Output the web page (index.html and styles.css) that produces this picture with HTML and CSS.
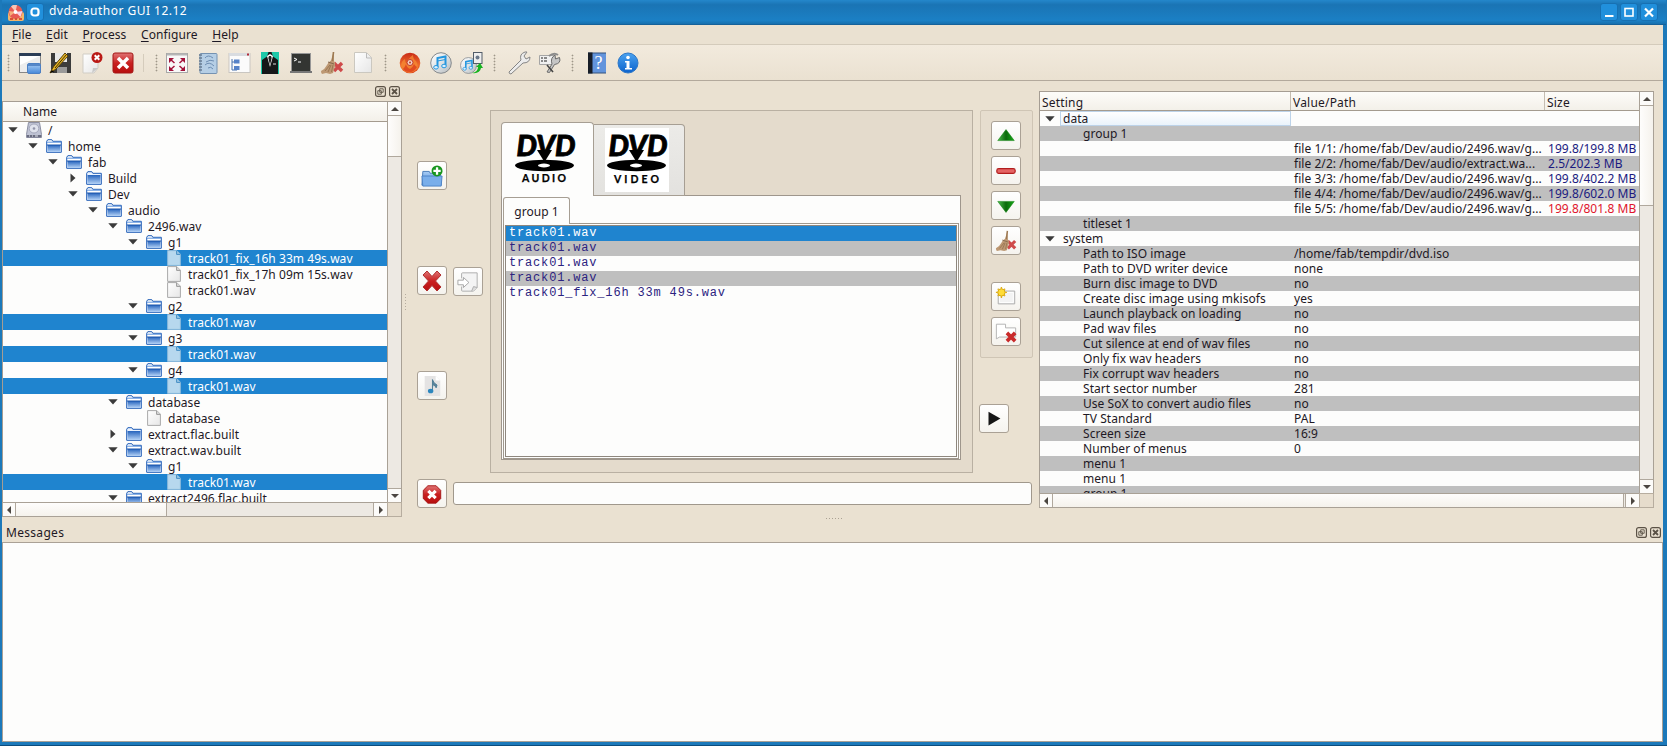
FILE: index.html
```html
<!DOCTYPE html>
<html lang="en">
<head>
<meta charset="utf-8">
<title>dvda-author GUI 12.12</title>
<link rel="stylesheet" href="styles.css">
</head>
<body>
<svg class="defs" width="0" height="0">
  <defs>
    <linearGradient id="gFolder" x1="0" y1="0" x2="0" y2="1"><stop offset="0" stop-color="#2563bd"/><stop offset="1" stop-color="#b4d2f6"/></linearGradient>
    <linearGradient id="gPage" x1="0" y1="0" x2="1" y2="1"><stop offset="0" stop-color="#fff"/><stop offset="1" stop-color="#e6e6e6"/></linearGradient>
    <linearGradient id="gRed" x1="0" y1="0" x2="0" y2="1"><stop offset="0" stop-color="#e07575"/><stop offset=".5" stop-color="#c92020"/><stop offset="1" stop-color="#b80f0f"/></linearGradient>
    <linearGradient id="gBlue" x1="0" y1="0" x2="0" y2="1"><stop offset="0" stop-color="#a9cdf5"/><stop offset="1" stop-color="#4688d8"/></linearGradient>
    <linearGradient id="gGreen" x1="0" y1="0" x2="1" y2="0"><stop offset="0" stop-color="#4dbb4d"/><stop offset=".5" stop-color="#0c6a0c"/><stop offset="1" stop-color="#16a916"/></linearGradient>
    <linearGradient id="gFire" x1="0" y1="0" x2="0" y2="1"><stop offset="0" stop-color="#c92b17"/><stop offset=".6" stop-color="#ee6c2b"/><stop offset="1" stop-color="#d83a1c"/></linearGradient>
    <linearGradient id="gDisc" x1="0" y1="0" x2="1" y2="1"><stop offset="0" stop-color="#fff"/><stop offset=".5" stop-color="#dfe3e6"/><stop offset="1" stop-color="#b5b9bb"/></linearGradient>
    <linearGradient id="gInfo" x1="0" y1="0" x2="0" y2="1"><stop offset="0" stop-color="#4ba3f0"/><stop offset="1" stop-color="#0c62cc"/></linearGradient>
    <symbol id="folder-open" viewBox="0 0 16 14"><path d="M.7 13.3V2.3L1.8.7h4l1 1.6h8.5v11z" fill="#fff" stroke="#1d5bb5"/><path d="M1.500 6h13v7h-13z" fill="url(#gFolder)"/><path d="M1 3.200h14" stroke="#5c93dd"/><path d="M1 6h14" stroke="#1c56ac"/></symbol>
    <symbol id="folder" viewBox="0 0 16 14"><path d="M.7 13.3V2.3L1.8.7h4l1 1.6h8.5v11z" fill="#eaf3ff" stroke="#1d5bb5"/><path d="M1.500 4h13v9h-13z" fill="url(#gFolder)"/></symbol>
    <symbol id="file" viewBox="0 0 14 16"><path d="M.6.6h9.2l3.6 3.6v11.2H.6z" fill="url(#gPage)" stroke="#a9a9a9"/><path d="M9.6.8v3.6h3.7" fill="#ddd" stroke="#999"/></symbol>
    <symbol id="file-sel" viewBox="0 0 14 16"><path d="M.6.6h9.2l3.6 3.6v11.2H.6z" fill="#b7d8ee" stroke="#89b8da"/><path d="M9.6.8v3.6h3.7" fill="#9ac6e4" stroke="#468fc4"/></symbol>
    <symbol id="disk" viewBox="0 0 16 16"><path d="M2.5.5h11l2 12v3H.5v-3z" fill="#bfc3d4" stroke="#8d90a3"/><ellipse cx="8" cy="6.500" rx="4.800" ry="4.500" fill="#dfe2ec" stroke="#989cb0" stroke-width=".8"/><circle cx="8" cy="6.500" r="1.300" fill="#9195aa"/><path d="M1 13h14v2.200H1z" fill="#696c80"/><path d="M3 14h1m2 0h1m2 0h3" stroke="#e5e6ed"/></symbol>
    <symbol id="down" viewBox="0 0 10 6"><path d="M.3.3h9.4L5 5.6z" fill="#3b3b3b"/></symbol>
    <symbol id="right" viewBox="0 0 6 10"><path d="M.5.5v9l5-4.500z" fill="#3b3b3b"/></symbol>
    <symbol id="cross" viewBox="0 0 22 22"><path d="M2 5l4-4 5 5.500L16 1l4 4-5.500 6 5.500 6-4 4-5-5.500L6 21l-4-4 5.500-6z" fill="url(#gRed)" stroke="#b13030"/></symbol>
    <symbol id="broom" viewBox="0 0 24 24"><path d="M14 12l8 8m0-8l-8 8" stroke="#cf4a4a" stroke-width="3.400"/><path d="M13.500 1l.5 9q2 2 1 5l-2 7-3 1-4-1-4 1q-1-1-1-3 4-2 6-6 1-3 4-4.500z" fill="#bd9873"/><path d="M5 20l5-6M8 21l3-7M11.500 21l1.500-7" stroke="#8b6845" stroke-width=".7"/><path d="M13.500 1l-1 9" stroke="#9d7952" stroke-width="1.600"/><path d="M8 11l6 2" stroke="#86684d"/></symbol>
    <symbol id="float" viewBox="0 0 11 11"><rect x=".6" y=".6" width="9.800" height="9.800" rx="2" fill="none" stroke="#5b5246" stroke-width="1.200"/><path d="M4.700 2.800h3.500v3.500H4.700zM2.800 4.700h3.500v3.500H2.800z" fill="none" stroke="#5b5246" stroke-width=".9"/></symbol>
    <symbol id="close" viewBox="0 0 11 11"><rect x=".6" y=".6" width="9.800" height="9.800" rx="2" fill="none" stroke="#5b5246" stroke-width="1.200"/><path d="M3 3l5 5m0-5L3 8" stroke="#5b5246" stroke-width="1.800"/></symbol>
    <symbol id="tuneDisc" viewBox="0 0 22 22"><circle cx="11" cy="11" r="10.300" fill="url(#gDisc)" stroke="#85898c"/><path d="M7.500 15V6l8-1.500v9" fill="none" stroke="#2296df" stroke-width="2"/><path d="M7.500 9l8-1.500" stroke="#2296df"/><ellipse cx="6" cy="15.300" rx="2.300" ry="1.800" fill="#d8efff" stroke="#2296df"/><ellipse cx="14" cy="14" rx="2.300" ry="1.800" fill="#d8efff" stroke="#2296df"/></symbol>
    <symbol id="dvd" viewBox="0 0 64 64"><text x="3.500" y="27.500" class="dvd-big" textLength="59" lengthAdjust="spacingAndGlyphs">DVD</text><path d="M24 22h15l-7.500 12z"/><path fill-rule="evenodd" d="M2 37.500a29.500 5.700 0 1 0 59 0a29.500 5.700 0 1 0-59 0zM25 37.500a6 1.900 0 1 0 12 0a6 1.900 0 1 0-12 0z"/></symbol>
  </defs>
</svg>

<div class="window">
  <header class="titlebar">
    <svg class="app-icon" viewBox="0 0 16 16"><rect y="7" width="16" height="9" rx="2" fill="#f2b569"/><circle cx="7.500" cy="7" r="7" fill="#e75a53"/><path d="M7.500 7L3 1.500A6 6 0 0 1 9 0z" fill="#f9c5b5"/><path d="M7.500 7l5 5 2-6z" fill="#f8d2e2"/><path d="M7.500 7L1 6l1 5z" fill="#f6b07d"/><circle cx="7.500" cy="7" r="2" fill="#fff"/><path d="M2 14h3m2 0h2m2 0h3" stroke="#d75136" stroke-width="2"/></svg>
    <span class="tbtn tbtn-menu"><svg viewBox="0 0 16 16"><rect x="4.500" y="4.500" width="7" height="7" rx="2.500" fill="none" stroke="#fff" stroke-width="2.200"/></svg></span>
    <h1>dvda-author GUI 12.12</h1>
    <span class="tbtn"><svg viewBox="0 0 16 16"><path d="M4 12h8.500" stroke="#fff" stroke-width="2"/></svg></span>
    <span class="tbtn"><svg viewBox="0 0 16 16"><rect x="4" y="4.500" width="8" height="7.500" fill="none" stroke="#fff" stroke-width="1.600"/></svg></span>
    <span class="tbtn"><svg viewBox="0 0 16 16"><path d="M4 4.500l8 8m0-8l-8 8" stroke="#fff" stroke-width="2.200"/></svg></span>
  </header>
  <nav class="menubar"><span><u>F</u>ile</span><span><u>E</u>dit</span><span><u>P</u>rocess</span><span><u>C</u>onfigure</span><span><u>H</u>elp</span></nav>
  <div class="toolbar">
    <i class="grip first"></i>
    <svg viewBox="0 0 24 24"><rect x="1.500" y="2.500" width="21" height="19" fill="#ededed" stroke="#878787"/><path d="M1 2h22v3H1z" fill="#2c3e57"/><path d="M2 5h20L2 14z" fill="#fff"/><rect x="9.500" y="12.500" width="13" height="10" rx="1.500" fill="url(#gBlue)" stroke="#4c80c4"/><path d="M10 14h12" stroke="#5687c8" stroke-width="2"/></svg>
    <svg viewBox="0 0 24 24"><path d="M2 2h20v20H4l-2-2z" fill="#3b3b3b"/><path d="M6 2h12v9H6z" fill="#e9e9e9"/><path d="M8 16h10v6H8z" fill="#999"/><path d="M2 20l3-5L16 2l3 3L7 18l-6 4z" fill="#e8b524" stroke="#5b430b"/><path d="M6 17L17.500 3.500" stroke="#3f3007"/><path d="M1 22l4-1-2-2z" fill="#000"/></svg>
    <svg viewBox="0 0 24 24"><path d="M3 3h15v14l-4 5H3z" fill="url(#gPage)" stroke="#d1cdc5"/><path d="M18 17l-6 5 1-5z" fill="#c8c8c8"/><circle cx="17" cy="6.500" r="5.500" fill="#ba1a16"/><path d="M14.700 4.200l4.600 4.600m0-4.600l-4.600 4.600" stroke="#fff" stroke-width="2"/></svg>
    <svg viewBox="0 0 24 24"><rect x="2" y="2" width="20" height="20" rx="2" fill="url(#gRed)" stroke="#a41717"/><path d="M7 7l10 10m0-10L7 17" stroke="#fff" stroke-width="3.500"/></svg>
    <i class="sep"></i><i class="grip"></i>
    <svg viewBox="0 0 24 24"><rect x="1.500" y="2.500" width="21" height="19" fill="#f8f8f8" stroke="#a7a7a7"/><path d="M2 3.500h20" stroke="#b6b6b6" stroke-width="2"/><path d="M4 7h5l-5 5zM20 7h-5l5 5zM4 20h5l-5-5zM20 20h-5l5-5z" fill="#a3133a"/><path d="M5 8l4.500 4m9.500-4l-4.500 4M5 19l4.500-4m9.500 4l-4.500-4" stroke="#a3133a" stroke-width="1.500"/></svg>
    <svg viewBox="0 0 24 24"><rect x="4" y="2.500" width="17" height="20" rx="1" fill="#b5cee5" stroke="#7592b1"/><path d="M3 4h3M3 7h3M3 10h3M3 13h3M3 16h3M3 19h3" stroke="#687c93" stroke-width="1.500"/><path d="M9 7q3-4 8 0m-7 4q4-3 8-1m-9 4q4-4 9 1m-6 2q3-2 5 1" fill="none" stroke="#6d8db2"/></svg>
    <svg viewBox="0 0 24 24"><rect x="2" y="2.500" width="21" height="19" fill="#fbfbfb" stroke="#c9c6c1"/><path d="M2 2h21v3H2z" fill="#d9dce0"/><path d="M5 8v11h5m-5-8h5" fill="none" stroke="#4870ab"/><path d="M7 8.500h5.500v4H7zM7 15h5.500v4H7z" fill="#5682c8"/><path d="M20 3.500h2" stroke="#b42b37" stroke-width="2"/></svg>
    <svg viewBox="0 0 24 24"><path d="M3 1h18v22H3z" fill="#1cc8a9"/><path d="M4 23V9l5-3.500L10.500 1h3L15 5.500 20 9v14z" fill="#161719"/><path d="M9 5l3 11 3-11-3-2z" fill="#fff"/><path d="M11 5h2l.7 2L12 14l-1.700-7z" fill="#222"/><path d="M15 13h3" stroke="#ddd"/></svg>
    <svg viewBox="0 0 24 24"><rect x="2.500" y="2.500" width="19" height="18" fill="#333532" stroke="#969696"/><path d="M1 20h22v2H1z" fill="#777"/><path d="M5 7l3 1.500L5 10m4 1h3" fill="none" stroke="#fff"/></svg>
    <svg><use href="#broom"/></svg>
    <svg viewBox="0 0 24 24"><path d="M3.500 1.500h12l5 5v15h-17z" fill="url(#gPage)" stroke="#cbc8c0"/><path d="M15.500 2v5h5" fill="#eee" stroke="#bbb"/></svg>
    <i class="grip narrow"></i>
    <svg viewBox="0 0 24 24"><circle cx="12" cy="12" r="10.300" fill="url(#gFire)"/><path d="M3 16q0-6 4-8 0 4 2 5 1-6 6-9 0 4 3 6 2 3 2 7-4 5-9 5-6-1-8-6z" fill="#f58b34" opacity=".75"/><path d="M5 18q2-2 3-5 1 4 4 5 3-2 4-5 2 3 3 3-3 5-7 5-5 0-7-3z" fill="#d62a17" opacity=".6"/><circle cx="12" cy="11.500" r="3" fill="#f3cfc4" stroke="#c23c29"/><circle cx="12" cy="11.500" r="1" fill="#b83c2c"/></svg>
    <svg viewBox="-1 -1 24 24"><use href="#tuneDisc" width="22" height="22"/></svg>
    <svg viewBox="0 0 24 24"><use href="#tuneDisc" x="0" y="6" width="17" height="17"/><rect x="13.500" y="1.500" width="8.500" height="11" fill="#eee" stroke="#525c68"/><circle cx="17.500" cy="6.500" r="2" fill="#6a7789"/><path d="M12 22q6-1 6-6h-2l4-4 3 5h-2q-1 6-9 5z" fill="#16b320"/></svg>
    <i class="grip narrow"></i>
    <svg viewBox="0 0 24 24"><path d="M2 21L14 9q-2-6 4-8h2l-3 4 2 3 4-2q0 6-7 6L4 23q-2 0-2-2z" fill="#ececec" stroke="#858585"/></svg>
    <svg viewBox="0 0 24 24"><path d="M1.500 4.500h14v9h-14z" fill="#f0f0f0" stroke="#a5a5a5"/><path d="M3 7h2m1 0h3M3 10h2m1 0h3" stroke="#888" stroke-width="2"/><path d="M9 21l5-8q-2-6 3-9l.5 4 4-1.500q2 6-5 7l-5 8z" fill="#c5c5c5" stroke="#6b6b6b"/><path d="M9 14l6 7" stroke="#444" stroke-width="1.600"/><path d="M11 5q5-4 9-1" fill="none" stroke="#8b8b8b" stroke-width="2"/></svg>
    <i class="grip narrow"></i>
    <svg viewBox="0 0 24 24"><path d="M3 2h18v20H3z" fill="#6294dc"/><path d="M3 2h18M3 22h18" stroke="#35537d"/><path d="M3 1.500h4.500v21H3z" fill="#171d27"/><text x="9.500" y="18" class="help-mark">?</text></svg>
    <svg viewBox="0 0 24 24"><circle cx="12" cy="12" r="10" fill="url(#gInfo)" stroke="#2c77c8"/><circle cx="12" cy="6.500" r="1.800" fill="#fff"/><path d="M9 10h4.500v7H16v1.500H9V17h1.500v-5.500H9z" fill="#fff"/></svg>
  </div>

  <main class="main">
    <section class="dock">
      <div class="dock-head"><svg><use href="#float"/></svg><svg><use href="#close"/></svg></div>
      <div class="tree">
        <div class="tree-body">
          <div class="tree-header">Name</div>
          <div class="rows">
            <div class="row d0"><b><svg class="dn"><use href="#down"/></svg></b><i><svg class="dk"><use href="#disk"/></svg></i>/</div>
            <div class="row d1"><b><svg class="dn"><use href="#down"/></svg></b><i><svg><use href="#folder-open"/></svg></i>home</div>
            <div class="row d2"><b><svg class="dn"><use href="#down"/></svg></b><i><svg><use href="#folder-open"/></svg></i>fab</div>
            <div class="row d3"><b><svg class="rt"><use href="#right"/></svg></b><i><svg><use href="#folder"/></svg></i>Build</div>
            <div class="row d3"><b><svg class="dn"><use href="#down"/></svg></b><i><svg><use href="#folder-open"/></svg></i>Dev</div>
            <div class="row d4"><b><svg class="dn"><use href="#down"/></svg></b><i><svg><use href="#folder-open"/></svg></i>audio</div>
            <div class="row d5"><b><svg class="dn"><use href="#down"/></svg></b><i><svg><use href="#folder-open"/></svg></i>2496.wav</div>
            <div class="row d6"><b><svg class="dn"><use href="#down"/></svg></b><i><svg><use href="#folder-open"/></svg></i>g1</div>
            <div class="row d7 sel"><b></b><i><svg class="fl"><use href="#file-sel"/></svg></i>track01_fix_16h 33m 49s.wav</div>
            <div class="row d7"><b></b><i><svg class="fl"><use href="#file"/></svg></i>track01_fix_17h 09m 15s.wav</div>
            <div class="row d7"><b></b><i><svg class="fl"><use href="#file"/></svg></i>track01.wav</div>
            <div class="row d6"><b><svg class="dn"><use href="#down"/></svg></b><i><svg><use href="#folder-open"/></svg></i>g2</div>
            <div class="row d7 sel"><b></b><i><svg class="fl"><use href="#file-sel"/></svg></i>track01.wav</div>
            <div class="row d6"><b><svg class="dn"><use href="#down"/></svg></b><i><svg><use href="#folder-open"/></svg></i>g3</div>
            <div class="row d7 sel"><b></b><i><svg class="fl"><use href="#file-sel"/></svg></i>track01.wav</div>
            <div class="row d6"><b><svg class="dn"><use href="#down"/></svg></b><i><svg><use href="#folder-open"/></svg></i>g4</div>
            <div class="row d7 sel"><b></b><i><svg class="fl"><use href="#file-sel"/></svg></i>track01.wav</div>
            <div class="row d5"><b><svg class="dn"><use href="#down"/></svg></b><i><svg><use href="#folder-open"/></svg></i>database</div>
            <div class="row d6"><b></b><i><svg class="fl"><use href="#file"/></svg></i>database</div>
            <div class="row d5"><b><svg class="rt"><use href="#right"/></svg></b><i><svg><use href="#folder"/></svg></i>extract.flac.built</div>
            <div class="row d5"><b><svg class="dn"><use href="#down"/></svg></b><i><svg><use href="#folder-open"/></svg></i>extract.wav.built</div>
            <div class="row d6"><b><svg class="dn"><use href="#down"/></svg></b><i><svg><use href="#folder-open"/></svg></i>g1</div>
            <div class="row d7 sel"><b></b><i><svg class="fl"><use href="#file-sel"/></svg></i>track01.wav</div>
            <div class="row d5"><b><svg class="dn"><use href="#down"/></svg></b><i><svg><use href="#folder-open"/></svg></i>extract2496.flac.built</div>
          </div>
        </div>
        <div class="vscroll"><span class="sb up"></span><span class="thumb t-tree"></span><span class="sb dn"></span></div>
        <div class="hscroll"><span class="sb lt"></span><span class="thumb h-tree"></span><span class="sb rt"></span></div>
        <div class="corner"></div>
      </div>
    </section>
    <div class="vgrip"></div>

    <section class="center">
      <div class="upper">
        <div class="left-tools">
          <button class="btn add"><svg viewBox="0 0 24 24"><path d="M1 22L2 7h7l1 2h11l1 13z" fill="url(#gBlue)" stroke="#4377b7"/><path d="M1 12h22l-1 11H2z" fill="#79aeea" stroke="#4a81c5"/><circle cx="17.500" cy="6.500" r="6" fill="#18961f"/><path d="M17.500 2.500v8m-4-4h8" stroke="#fff" stroke-width="2.500"/></svg></button>
          <div class="pair"><button class="btn"><svg><use href="#cross"/></svg></button><button class="btn imp"><svg viewBox="0 0 24 24"><path d="M5 8V3q0-1 1-1h16v16l-4 4H6q-1 0-1-1v-4" fill="#f4f4f4" stroke="#aaa"/><path d="M16 22l2-5 4 1" fill="#ddd" stroke="#aaa"/><path d="M1 10h6V7l6 5.500L7 18v-3H1z" fill="#fff" stroke="#a2a2a2"/></svg></button></div>
          <button class="btn note"><svg viewBox="0 0 24 24"><path d="M4 1h12l5 5v17H4z" fill="#e4e3e3"/><path d="M16 1v5h5z" fill="#fff"/><path d="M12.500 17V5q1 4 5 6l-1 3q-1-3-3-3" fill="#59849d" stroke="#497892"/><ellipse cx="10.500" cy="17.500" rx="3" ry="2.500" fill="#2c86bd"/></svg></button>
        </div>
        <div class="frame">
          <div class="disc-tabs">
            <div class="dtab on"><svg viewBox="0 0 64 64"><use href="#dvd" width="64" height="64"/><text x="9" y="54" class="dvd-small" textLength="44">AUDIO</text></svg></div>
            <div class="dtab"><svg class="white" viewBox="0 0 64 64"><use href="#dvd" width="64" height="64"/><text x="9" y="54.500" class="dvd-small" textLength="45">VIDEO</text></svg></div>
          </div>
          <div class="pane">
            <div class="gtab">group 1</div>
            <div class="ipane"><div class="list">
              <div class="sel">track01.wav</div><div class="alt">track01.wav</div><div>track01.wav</div><div class="alt">track01.wav</div><div>track01_fix_16h 33m 49s.wav</div>
            </div></div>
          </div>
        </div>
        <div class="side">
          <div class="side-box">
            <button class="btn"><svg viewBox="0 0 24 24"><path d="M12 5l9 12H3z" fill="url(#gGreen)" stroke="#158415" stroke-width=".6"/></svg></button>
            <button class="btn"><svg viewBox="0 0 24 24"><rect x="2" y="9.500" width="20" height="5" rx="2" fill="#e56464" stroke="#b21d1d" stroke-width="1.300"/></svg></button>
            <button class="btn"><svg viewBox="0 0 24 24"><path d="M12 19l9-12H3z" fill="url(#gGreen)" stroke="#158415" stroke-width=".6"/></svg></button>
            <button class="btn"><svg><use href="#broom"/></svg></button>
            <button class="btn gap"><svg viewBox="0 0 24 24"><path d="M3.500 5.500h18v14h-18z" fill="#eee" stroke="#aaa"/><path d="M5 7h15v11H5z" fill="#f3f3f3" stroke="#fff"/><circle cx="7" cy="7" r="4" fill="#ffdc37" stroke="#d2a20f"/><path d="M7 1v2m0 8v2M1 7h2m8 0h2M3 3l1 1m6 6l1 1M11 3l-1 1M3 11l1-1" stroke="#dfae16" stroke-width="1.500"/></svg></button>
            <button class="btn"><svg viewBox="0 0 24 24"><path d="M1.500 3.500h10v4h11v10H5l-3.500 2z" fill="#fff" stroke="#b0b0b0"/><path d="M13 13l9 9m0-9l-9 9" stroke="#c92a2a" stroke-width="4"/></svg></button>
          </div>
          <button class="btn play"><svg viewBox="0 0 24 24"><path d="M6 4l13 7.500L6 19z" fill="#161616"/></svg></button>
        </div>
      </div>
      <div class="lower"><button class="btn"><svg viewBox="0 0 24 24"><path d="M7.500 3h9l5 5v9l-5 5h-9l-5-5V8z" fill="url(#gRed)" stroke="#a41313"/><path d="M8 8.500l8 8m0-8l-8 8" stroke="#fff" stroke-width="3.500"/></svg></button><div class="input"></div></div>
      <div class="hgrip"></div>
    </section>

    <section class="settings">
      <div class="set-body">
        <div class="srow head"><span>Setting</span><span>Value/Path</span><span>Size</span></div>
        <div class="srow top current"><span><svg><use href="#down"/></svg><em>data</em></span></div>
        <div class="srow alt"><span>group 1</span></div>
        <div class="srow"><span></span><span>file 1/1: /home/fab/Dev/audio/2496.wav/g...</span><span class="blue">199.8/199.8 MB</span></div>
        <div class="srow alt"><span></span><span>file 2/2: /home/fab/Dev/audio/extract.wa...</span><span class="blue">2.5/202.3 MB</span></div>
        <div class="srow"><span></span><span>file 3/3: /home/fab/Dev/audio/2496.wav/g...</span><span class="blue">199.8/402.2 MB</span></div>
        <div class="srow alt"><span></span><span>file 4/4: /home/fab/Dev/audio/2496.wav/g...</span><span class="blue">199.8/602.0 MB</span></div>
        <div class="srow"><span></span><span>file 5/5: /home/fab/Dev/audio/2496.wav/g...</span><span class="red">199.8/801.8 MB</span></div>
        <div class="srow alt"><span>titleset 1</span></div>
        <div class="srow top"><span><svg><use href="#down"/></svg><em>system</em></span></div>
        <div class="srow alt"><span>Path to ISO image</span><span>/home/fab/tempdir/dvd.iso</span></div>
        <div class="srow"><span>Path to DVD writer device</span><span>none</span></div>
        <div class="srow alt"><span>Burn disc image to DVD</span><span>no</span></div>
        <div class="srow"><span>Create disc image using mkisofs</span><span>yes</span></div>
        <div class="srow alt"><span>Launch playback on loading</span><span>no</span></div>
        <div class="srow"><span>Pad wav files</span><span>no</span></div>
        <div class="srow alt"><span>Cut silence at end of wav files</span><span>no</span></div>
        <div class="srow"><span>Only fix wav headers</span><span>no</span></div>
        <div class="srow alt"><span>Fix corrupt wav headers</span><span>no</span></div>
        <div class="srow"><span>Start sector number</span><span>281</span></div>
        <div class="srow alt"><span>Use SoX to convert audio files</span><span>no</span></div>
        <div class="srow"><span>TV Standard</span><span>PAL</span></div>
        <div class="srow alt"><span>Screen size</span><span>16:9</span></div>
        <div class="srow"><span>Number of menus</span><span>0</span></div>
        <div class="srow alt"><span>menu 1</span></div>
        <div class="srow"><span>menu 1</span></div>
        <div class="srow alt"><span>group 1</span></div>
      </div>
      <div class="vscroll"><span class="sb up"></span><span class="thumb t-set"></span><span class="sb dn"></span></div>
      <div class="hscroll"><span class="sb lt"></span><span class="thumb h-set"></span><span class="sb rt"></span></div>
      <div class="corner"></div>
    </section>
  </main>

  <section class="messages">
    <div class="msg-head"><span>Messages</span><svg><use href="#float"/></svg><svg><use href="#close"/></svg></div>
    <div class="msg-body"></div>
  </section>
</div>
</body>
</html>
```

FILE: styles.css
```css
* { box-sizing: border-box; }
body { margin: 0; font-family: "Noto Sans", "Open Sans", sans-serif; font-size: 12px; letter-spacing: 0.05px; color: #1d1824; }
.defs { position: absolute; }
svg { display: block; flex: none; }
h1 { margin: 0; }
i, em { font-style: normal; }

.window { width: 1667px; height: 746px; padding: 0 4px 3px 2px; background: #1c79ba; border-bottom: 1px solid #0d4d7e; overflow: hidden; display: flex; flex-direction: column; }
.titlebar { height: 25px; flex: none; display: flex; align-items: center; gap: 2px; margin-right: -3px; padding: 0 8px 1px 6px; background: linear-gradient(#2487cb 0, #1a74b4 20%, #1b80c5 85%, #1770ae); border-bottom: 1px solid #15619a; }
.app-icon { width: 16px; height: 16px; margin-top: 2px; }
.titlebar h1 { flex: 1; margin: -3px 0 0 3px; font-size: 12px; font-weight: 400; letter-spacing: .48px; color: #fff; }
.tbtn { width: 18px; height: 18px; background: #2190dc; border: 1px solid #1770b2; border-radius: 3px; }
.tbtn svg { width: 16px; height: 16px; }

.menubar { height: 20px; flex: none; display: flex; gap: 14.500px; padding: 0 10px; line-height: 20px; letter-spacing: .1px; background: #eae1d1; border-bottom: 1px solid #d4cbbb; }
.menubar u { text-underline-offset: 2px; }
.toolbar { height: 36px; flex: none; display: flex; align-items: center; background: linear-gradient(#f2eadd, #eae1d1); border-bottom: 1px solid #b3a99c; }
.toolbar svg { width: 24px; height: 24px; margin: 0 3.500px; }
.grip { width: 16px; height: 18px; background: radial-gradient(circle, #9f9789 .8px, transparent 1.100px) 5px 0 / 3px 3px repeat-y; }
.grip.first { width: 12.500px; background-position-x: 5px; }
.sep { width: 7px; height: 18px; border-left: 1px solid #d5ccbc; margin-left: 4px; }
.toolbar .sep + .grip { width: 12px; }

.main { height: 440px; flex: none; display: flex; background: #eae1d1; }
.dock { width: 400px; flex: none; }
.dock-head { height: 20px; display: flex; justify-content: flex-end; align-items: center; gap: 3px; padding-right: 2px; padding-top: 1px; }
.dock-head svg, .msg-head svg { width: 11px; height: 11px; }
.tree { width: 400px; height: 416px; display: grid; grid-template: 400px 15px / 385px 15px; border-top: 1px solid #a59d93; }
.tree-body { border-left: 1px solid #a59d93; overflow: hidden; background: #fdfdfc; }
.tree-header { height: 20px; line-height: 20px; padding-left: 20px; background: linear-gradient(#fdfcf9, #f3f0e9); border-bottom: 1px solid #a49b8f; letter-spacing: .1px; }
.row { height: 16px; display: flex; line-height: 17px; white-space: pre; }
.row b { width: 19px; flex: none; padding-top: 5px; }
.row b .dn { width: 10px; height: 6px; margin: 0 auto; }
.row b .rt { width: 6px; height: 10px; margin: -2px auto 0; }
.row i { width: 22px; margin-left: 4px; flex: none; padding-top: 1px; }
.row i svg { width: 16px; height: 14px; }
.row i .fl { width: 14px; height: 16px; margin: -1px 0 0 1px; }
.row i .dk { height: 16px; margin-top: -1px; }
.row.sel { background: #1f84cf; color: #fff; }
.d1 { padding-left: 20px; } .d2 { padding-left: 40px; } .d3 { padding-left: 60px; } .d4 { padding-left: 80px; }
.d5 { padding-left: 100px; } .d6 { padding-left: 120px; } .d7 { padding-left: 140px; }

.vscroll { display: flex; flex-direction: column; background: #ede9e3; border: 1px solid #a9a196; border-width: 0 1px; width: 15px; }
.hscroll { display: flex; background: #ede9e3; border: 1px solid #a9a196; border-width: 1px 0; height: 15px; }
.corner { width: 15px; height: 15px; border: 1px solid #b7ad9f; background: #e6dccc; }
.sb { flex: none; width: 13px; height: 13px; background: #fcfbf9; display: flex; align-items: center; justify-content: center; }
.vscroll .sb { height: 14px; }
.hscroll .sb { width: 14px; }
.sb::before { content: ""; border: 4px solid transparent; }
.sb.up { border-bottom: 1px solid #b0a89d; }
.sb.up::before { border-bottom-color: #4b4641; border-top: 0; }
.vscroll .sb.dn { border-top: 1px solid #b0a89d; margin-top: auto; }
.sb.dn::before { border-top-color: #4b4641; border-bottom: 0; }
.hscroll .sb.lt { border-right: 1px solid #b0a89d; border-left: 1px solid #b0a89d; }
.sb.lt::before { border-right-color: #4b4641; border-left: 0; }
.hscroll .sb.rt { border-left: 1px solid #b0a89d; margin-left: auto; }
.sb.rt::before { border-left-color: #4b4641; border-right: 0; }
.thumb { background: linear-gradient(90deg, #fefdfc, #f5f2ec); border: 0 solid #b0a89d; }
.t-tree { height: 41px; border-bottom-width: 1px; }
.h-tree { width: 151px; border-right-width: 1px; }
.t-set { height: 100px; border-bottom-width: 1px; }
.h-set { flex: 1; margin-right: 1px; border-right-width: 1px; }
.h-tree, .h-set { background: linear-gradient(#fefdfc, #f5f2ec); }

.vgrip { width: 7px; height: 18px; margin-top: 212px; background: radial-gradient(circle, #b5ac9e .6px, transparent .9px) 2px 0 / 3px 3px repeat-y; }

.center { width: 628px; flex: none; padding: 29px 5px 0 8px; }
.upper { display: flex; height: 363px; }
.left-tools { width: 73px; flex: none; padding-top: 51px; }
.btn { width: 30px; height: 29px; padding: 0; display: flex; align-items: center; justify-content: center; background: linear-gradient(#fff, #f5f3ee); border: 1px solid #aaa195; border-radius: 3px; flex: none; }
.btn svg { width: 22px; height: 22px; }
.pair { display: flex; gap: 6px; margin: 76px 0; height: 29px; }
.imp { margin-top: 1px; }
.frame { width: 483px; flex: none; background: #e4dbcc; border: 1px solid #b9b0a2; padding: 11px 10px 0; }
.disc-tabs { position: relative; display: flex; height: 74px; align-items: flex-end; }
.dtab { width: 91px; height: 72px; background: linear-gradient(#ecebe8, #e3e2df); border: 1px solid #a69e93; border-left: 0; border-radius: 0 4px 0 0; display: flex; justify-content: center; padding-top: 3px; }
.dtab.on { height: 74px; width: 93px; background: #fdfdfc; border-left: 1px solid #a69e93; border-bottom: 0; border-radius: 4px 4px 0 0; padding-top: 5px; }
.dtab svg { width: 64px; height: 64px; margin-left: -6px; }
.dtab .white { background: #fff; margin-left: -5px; }
.dvd-big { font: italic 900 27.500px Lato, sans-serif; letter-spacing: 0; stroke: #000; stroke-width: .8px; }
.dvd-small { font: 700 10.500px Lato, sans-serif; letter-spacing: 0; stroke: #000; stroke-width: .25px; }
.help-mark { font: 18px "Liberation Serif", serif; fill: #fff; }
.pane { width: 460px; height: 265px; margin-top: -1px; background: #fdfdfc; border: 1px solid #9e968c; padding: 1px 1px 0; }
.gtab { position: relative; width: 67px; height: 27px; border: 1px solid #a69e93; border-bottom: 0; border-radius: 3px 3px 0 0; background: #fdfdfc; text-align: center; line-height: 27px; margin-bottom: -1px; }
.ipane { width: 456px; height: 236px; border: 1px solid #a0988d; padding: 1px; }
.list { height: 232px; border: 1px solid #8e877e; font-family: "Liberation Mono", monospace; font-size: 12px; letter-spacing: .83px; line-height: 15px; color: #2c2380; overflow: hidden; }
.list div { height: 15px; padding-left: 3px; white-space: pre; }
.list .sel { background: #1f84cf; color: #fff; }
.list .alt { background: #bfbfbf; }
.side { width: 60px; flex: none; padding-left: 7px; }
.side-box { width: 53px; height: 248px; border: 1px solid #cfc5b5; border-radius: 2px; background: #e6ddce; padding: 10px 0 0 10px; display: flex; flex-direction: column; gap: 6px; }
.side-box .gap { margin-top: 21px; }
.play { margin: 46px 0 0 -1px; }
.lower { display: flex; align-items: center; gap: 6px; margin-top: 6px; }
.input { width: 580px; height: 23px; background: #fdfdfc; border: 1px solid #a0988c; border-radius: 3px; }
.hgrip { width: 18px; height: 3px; margin: 9px auto 0 408px; background: radial-gradient(circle, #aaa193 .7px, transparent 1px) 0 0 / 3px 3px repeat-x; }

.settings { width: 615px; height: 417px; margin: 10px 0 0 2px; display: grid; grid-template: 401px 15px / 600px 15px; border-top: 1px solid #a59d93; }
.set-body { border-left: 1px solid #a59d93; background: #fdfdfc; overflow: hidden; }
.srow { height: 15px; display: grid; grid-template-columns: 251px 254px 94px; grid-template-rows: 15px; line-height: 16px; white-space: pre; }
.srow span:first-child { padding-left: 43px; }
.srow span { padding-left: 3px; }
.srow.alt { background: #bfbfbf; }
.srow.head { height: 19px; line-height: 21px; grid-template-rows: 18px; background: linear-gradient(#fdfcf9, #f3f0e9); border-bottom: 1px solid #a49b8f; letter-spacing: .2px; }
.srow.head span { border-right: 1px solid #c5bdb1; padding-left: 2px; }
.srow.head span:last-child { border: 0; }
.srow.top span:first-child { display: flex; padding-left: 5px; }
.srow.top svg { width: 10px; height: 6px; margin: 5px 5px 0 0; }
.srow em { flex: 1; padding-left: 2px; border: 1px solid transparent; line-height: 14px; }
.srow.current em { background: linear-gradient(#fff, #eaf3fb); border-color: #bdd3e9; }
.srow .blue { color: #1a1a80; }
.srow .red { color: #e0152c; }

.messages { flex: 1; display: flex; flex-direction: column; background: #eae1d1; }
.msg-head { height: 21px; flex: none; display: flex; align-items: center; gap: 3px; padding: 2px 2px 0 4px; letter-spacing: .3px; }
.msg-head span { flex: 1; }
.msg-body { flex: 1; background: #fdfdfc; border: 1px solid #aaa196; }
```
